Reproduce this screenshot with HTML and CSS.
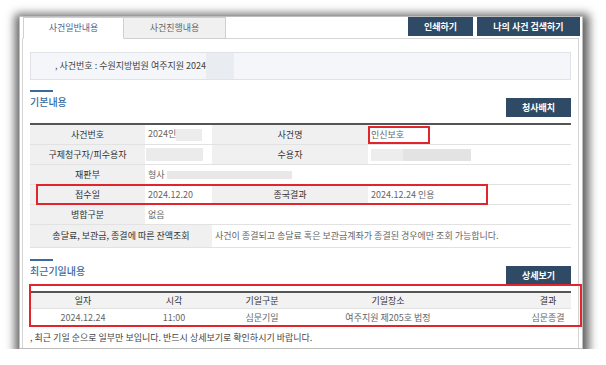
FILE: index.html
```html
<!doctype html>
<html>
<head>
<meta charset="utf-8">
<title>사건일반내용</title>
<link rel="stylesheet" href="styles.css">
</head>
<body>
<div class="window">
	<div class="topbar">
		<div class="tabs">
			<a class="tab on">사건일반내용</a>
			<a class="tab">사건진행내용</a>
		</div>
		<div class="btns">
			<a class="btn w1">인쇄하기</a>
			<a class="btn w2">나의 사건 검색하기</a>
		</div>
	</div>
	<div class="panel">
		<div class="casebox"><span class="dot">,</span> 사건번호 : 수원지방법원 여주지원 2024<span class="mask m0"></span></div>

		<div class="sec-head">
			<h3>기본내용</h3>
			<a class="btn w1">청사배치</a>
		</div>
		<table class="info">
			<colgroup><col class="c1"><col class="c2"><col class="c3"><col class="c4"></colgroup>
			<tr>
				<th>사건번호</th><td>2024인<span class="mask m1"></span></td>
				<th>사건명</th><td>인신보호</td>
			</tr>
			<tr>
				<th>구제청구자/피수용자</th><td><span class="mask m2"></span></td>
				<th>수용자</th><td><span class="mask m3"></span><span class="mask m4"></span></td>
			</tr>
			<tr>
				<th>재판부</th><td colspan="3">형사<span class="mask m5"></span></td>
			</tr>
			<tr>
				<th>접수일</th><td>2024.12.20</td>
				<th>종국결과</th><td>2024.12.24 인용</td>
			</tr>
			<tr>
				<th>병합구분</th><td colspan="3">없음</td>
			</tr>
			<tr class="last">
				<th colspan="2">송달료, 보관금, 종결에 따른 잔액조회</th>
				<td colspan="2">사건이 종결되고 송달료 혹은 보관금계좌가 종결된 경우에만 조회 가능합니다.</td>
			</tr>
		</table>

		<div class="sec-head sec2">
			<h3>최근기일내용</h3>
			<a class="btn w1">상세보기</a>
		</div>
		<table class="dates">
			<colgroup><col class="d1"><col class="d2"><col class="d3"><col class="d4"><col class="d5"></colgroup>
			<tr><th>일자</th><th>시각</th><th>기일구분</th><th>기일장소</th><th class="res">결과</th></tr>
			<tr><td>2024.12.24</td><td>11:00</td><td>심문기일</td><td>여주지원 제205호 법정</td><td class="res">심문종결</td></tr>
		</table>
		<p class="note"><span class="dot">,</span> 최근 기일 순으로 일부만 보입니다. 반드시 상세보기로 확인하시기 바랍니다.</p>
	</div>

	<!-- 표시용 빨간 박스 -->
	<div class="mark r1"></div>
	<div class="mark r2"></div>
	<div class="mark r3"></div>
</div>
</body>
</html>
```

FILE: styles.css
```css
*{ margin:0; padding:0; box-sizing:border-box;}
body{ background:#fff; font-family:"Noto Sans CJK KR","Noto Sans",sans-serif; font-size:9px; color:#333;}
a{ text-decoration:none; cursor:pointer;}

.window{
	position:relative;
	width:564px; height:333px;
	margin:16px 0 0 19px;
	background:#fff;
	border:1px solid #bdbdbd;
	box-shadow:1px 3px 9px 5px rgba(0,0,0,.62);
}

.topbar{ display:flex; justify-content:space-between; align-items:flex-start; height:21px; padding:0 2px 0 3px;}
.tabs{ display:flex; position:relative; z-index:2;}
.tab{
	display:block; width:102px; height:22px; line-height:20px;
	text-align:center; color:#666;
	background:#f0f0f0; border:1px solid #d0d0d0;
}
.tab.on{ width:101px; background:#fff; color:#3d6796; border-bottom-color:#fff;}
.tab + .tab{ border-left:none;}
.btns{ display:flex; gap:4px;}

.btn{
	display:block; height:19px; line-height:19px;
	text-align:center; color:#fff; font-weight:bold;
	background:#2e4a64;
}
.w1{ width:65px;}
.w2{ width:103px;}

.panel{
	height:310px;
	margin:0 3px 0 2px;
	padding:13px 7px 0 7px;
	border:1px solid #d5d5d5; border-bottom:none;
}

.casebox{
	height:28px; line-height:26px;
	padding-left:24px;
	background:#f4f6f9; border:1px solid #dfe2e6;
	color:#444;
}
.dot{ color:#555;}
.mask{ display:inline-block; vertical-align:middle; background:#e6e8ec;}
.m0{ width:28px; height:26px; margin-top:-2px; background:#e9ecf1;}
.m1{ width:26px; height:12px; background:#ececec;}
.m2{ width:57px; height:13px; background:#ebebeb; margin-left:-2px;}
.m3{ width:32px; height:12px; background:#ededed;}
.m4{ width:68px; height:12px; background:#e3e3e3;}
.m5{ width:125px; height:8px; background:#e8e8e8; margin-left:2px;}

.sec-head{ display:flex; justify-content:space-between; align-items:flex-start; height:33px; margin-top:10px;}
.sec-head h3{ font-size:10px; font-weight:500; line-height:14px; color:#3a6a9e;}
.sec-head h3:before{ content:""; display:block; width:23px; height:2px; margin-bottom:3px; background:#3a6a9e;}
.sec-head .btn{ margin-top:8px;}
.sec2{ height:32px; margin-top:11px;}
.sec2 .btn{ margin-top:7px;}

table{ width:100%; border-collapse:collapse; table-layout:fixed;}
.info{ border-top:2px solid #555;}
.info col.c1{ width:115px;}
.info col.c2{ width:67px;}
.info col.c3{ width:156px;}
.info col.c4{ width:203px;}
.info th, .info td{ height:20px; border-bottom:1px solid #e2e2e2; white-space:nowrap; overflow:hidden;}
.info th{ background:#f0f0f0; font-weight:normal; color:#333; text-align:center;}
.info td{ color:#666; padding-left:3px;}
.info tr.last th, .info tr.last td{ height:23px;}

.dates{ border-top:2px solid #555;}
.dates col.d1{ width:106px;}
.dates col.d2{ width:76px;}
.dates col.d3{ width:100px;}
.dates col.d4{ width:152px;}
.dates col.d5{ width:107px;}
.dates th, .dates td{ height:17px; text-align:center; border-bottom:1px solid #e2e2e2;}
.dates th{ background:#f2f2f2; font-weight:normal; color:#333;}
.dates td{ color:#666;}
.dates .res{ padding-left:61px;}

.note{ margin-top:5px; line-height:14px; color:#444;}

.mark{ position:absolute; border:2px solid #e0262c;}
.r1{ left:348px; top:109px; width:62px; height:18px;}
.r2{ left:16px; top:167px; width:452px; height:21px;}
.r3{ left:9px; top:267px; width:553px; height:43px;}
```
